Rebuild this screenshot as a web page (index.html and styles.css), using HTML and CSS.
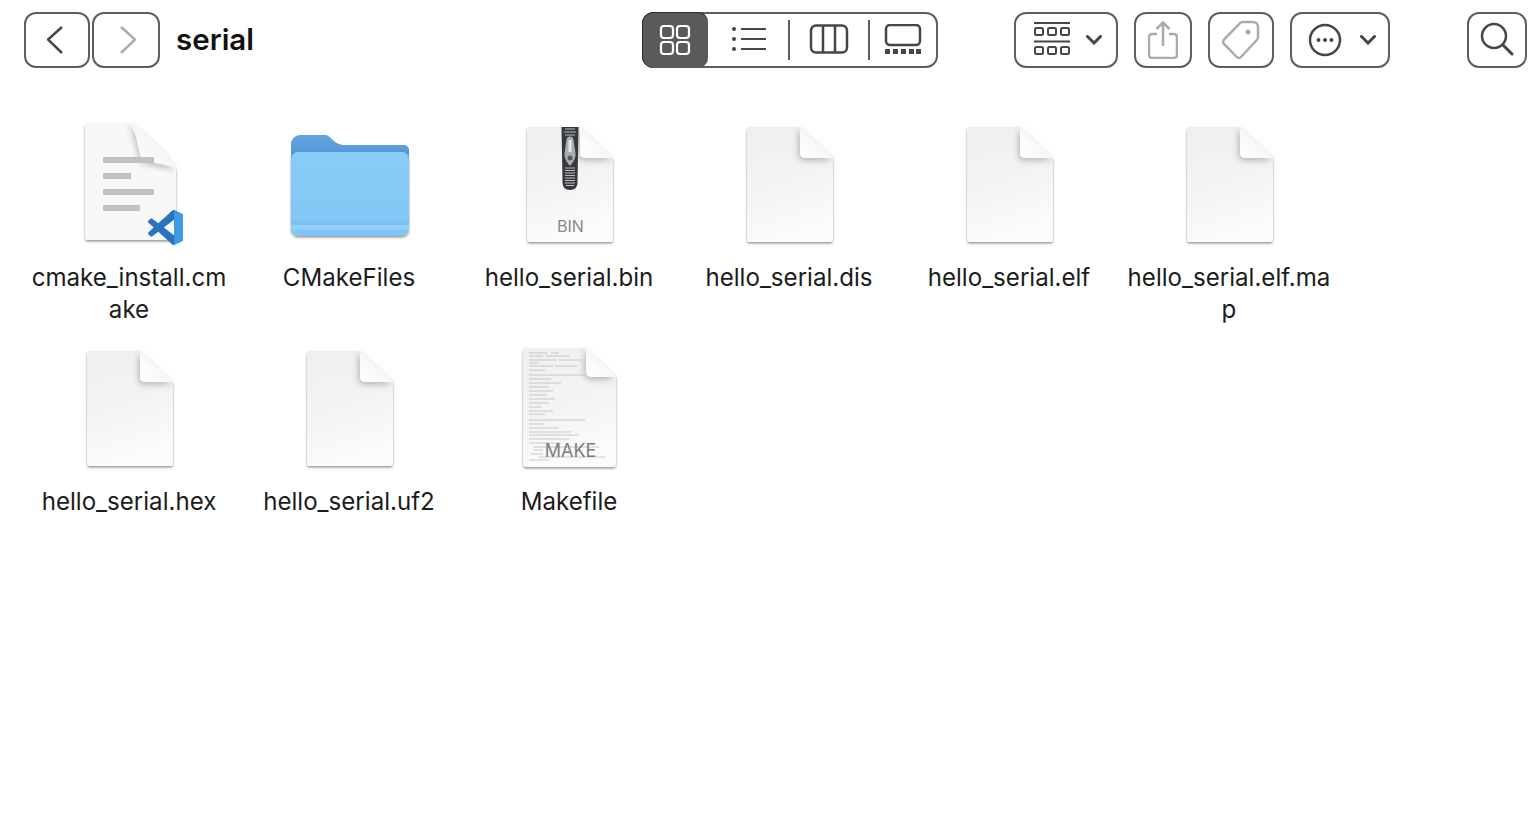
FILE: index.html
```html
<!DOCTYPE html>
<html lang="en">
<head>
  <meta charset="UTF-8" />
  <title>serial</title>
  <link rel="stylesheet" href="styles.css">
</head>
<body>

<svg class="defs" width="0" height="0">
  <defs>
    <linearGradient id="paper" x1="0" y1="0" x2="0.25" y2="1">
      <stop offset="0" stop-color="#efefef"/>
      <stop offset="0.6" stop-color="#f4f4f4"/>
      <stop offset="1" stop-color="#fbfbfb"/>
    </linearGradient>
    <linearGradient id="fold" x1="0" y1="1" x2="1" y2="0">
      <stop offset="0" stop-color="#ffffff"/>
      <stop offset="0.7" stop-color="#f4f4f4"/>
      <stop offset="1" stop-color="#e2e2e2"/>
    </linearGradient>
    <linearGradient id="folder-front" x1="0" y1="0" x2="0" y2="1">
      <stop offset="0" stop-color="#8accf8"/>
      <stop offset="1" stop-color="#80c5f5"/>
    </linearGradient>
    <linearGradient id="folder-back" x1="0" y1="0" x2="0" y2="1">
      <stop offset="0" stop-color="#62a6e0"/>
      <stop offset="1" stop-color="#4f93d3"/>
    </linearGradient>
    <filter id="edge" x="-10%" y="-10%" width="120%" height="120%">
      <feDropShadow dx="0" dy="1.5" stdDeviation="1" flood-color="#000" flood-opacity="0.42"/>
    </filter>
    <filter id="fold-shadow" x="-40%" y="-40%" width="180%" height="180%">
      <feDropShadow dx="-1.500" dy="2.500" stdDeviation="3" flood-color="#000" flood-opacity="0.25"/>
    </filter>
    <symbol id="doc" viewBox="0 0 120 128">
      <path d="M21 7H71L104 38V119a3 3 0 0 1-3 3H21a3 3 0 0 1-3-3V10a3 3 0 0 1 3-3Z" fill="url(#paper)" filter="url(#edge)"/>
      <path d="M71 7L104 38H76a5 5 0 0 1-5-5Z" fill="url(#fold)" filter="url(#fold-shadow)"/>
    </symbol>
  </defs>
</svg>

<div class="toolbar">
  <div class="nav">
    <button class="btn btn-back">
      <svg width="20" height="32" viewBox="0 0 20 32"><path class="dark" d="M15 3L1 15.500L15 29"/></svg>
    </button>
    <button class="btn btn-forward">
      <svg width="20" height="32" viewBox="0 0 20 32"><path class="faint" d="M5 3L19 15.500L5 29"/></svg>
    </button>
  </div>
  <div class="title">serial</div>

  <div class="views">
    <div class="view view-active">
      <svg width="32" height="32" viewBox="0 0 32 32">
        <g class="light">
          <rect x="2" y="2" width="12" height="12" rx="3"/>
          <rect x="18" y="2" width="12" height="12" rx="3"/>
          <rect x="2" y="18" width="12" height="12" rx="3"/>
          <rect x="18" y="18" width="12" height="12" rx="3"/>
        </g>
      </svg>
    </div>
    <div class="view view-list">
      <svg width="36" height="32" viewBox="0 0 36 32">
        <circle class="dot" cx="3" cy="5" r="2"/><circle class="dot" cx="3" cy="15" r="2"/><circle class="dot" cx="3" cy="25" r="2"/>
        <path class="dark thin" d="M10 5H35M10 15H35M10 25H35"/>
      </svg>
    </div>
    <div class="sep"></div>
    <div class="view view-columns">
      <svg width="40" height="32" viewBox="0 0 40 32">
        <rect class="dark" x="2" y="1.500" width="36" height="27" rx="5"/>
        <path class="dark" d="M14 1.500V28.500M26 1.500V28.500"/>
      </svg>
    </div>
    <div class="sep"></div>
    <div class="view view-gallery">
      <svg width="38" height="32" viewBox="0 0 38 32">
        <rect class="dark" x="2" y="1" width="34" height="20" rx="4"/>
        <path class="dot" d="M1 25h5v5H1zM9 25h5v5H9zM17 25h5v5h-5zM25 25h5v5h-5zM32 25h5v5h-5z"/>
      </svg>
    </div>
  </div>

  <button class="btn btn-group">
    <svg width="36" height="36" viewBox="0 0 36 36">
      <path class="dark thin" d="M0 1H36M0 19.500H36"/>
      <g class="dark thin">
        <rect x="1" y="6" width="8" height="7" rx="1.500"/><rect x="14" y="6" width="8" height="7" rx="1.500"/><rect x="27" y="6" width="8" height="7" rx="1.500"/>
        <rect x="1" y="25" width="8" height="7" rx="1.500"/><rect x="14" y="25" width="8" height="7" rx="1.500"/><rect x="27" y="25" width="8" height="7" rx="1.500"/>
      </g>
    </svg>
    <svg width="16" height="10" viewBox="0 0 16 10"><path class="dark bold" d="M1.500 1.500L8 8L14.500 1.500"/></svg>
  </button>
  <button class="btn btn-share">
    <svg width="30" height="38" viewBox="0 0 30 38">
      <path class="faint" d="M9 13H4a3 3 0 0 0-3 3V34a3 3 0 0 0 3 3H26a3 3 0 0 0 3-3V16a3 3 0 0 0-3-3H21"/>
      <path class="faint" d="M15 25V2M8.500 8L15 1.500L21.500 8"/>
    </svg>
  </button>
  <button class="btn btn-tag">
    <svg width="38" height="40" viewBox="0 0 38 40">
      <path class="faint" d="M21 2H31a5 5 0 0 1 5 5V17a4 4 0 0 1-1.200 3L19 37a3 3 0 0 1-4.300 0L2 24a3 3 0 0 1 0-4.300L18 3.200A4 4 0 0 1 21 2Z"/>
      <circle cx="26" cy="12" r="2.500" fill="#aaa"/>
    </svg>
  </button>
  <button class="btn btn-more">
    <svg width="34" height="34" viewBox="0 0 34 34">
      <circle class="dark" cx="17" cy="17" r="15"/>
      <circle class="dot" cx="10.500" cy="17" r="2"/><circle class="dot" cx="17" cy="17" r="2"/><circle class="dot" cx="23.500" cy="17" r="2"/>
    </svg>
    <svg width="16" height="10" viewBox="0 0 16 10"><path class="dark bold" d="M1.500 1.500L8 8L14.500 1.500"/></svg>
  </button>
  <button class="btn btn-search">
    <svg width="34" height="36" viewBox="0 0 34 36">
      <circle class="dark" cx="14" cy="14" r="12"/>
      <path class="dark bold" d="M23 23L32 32"/>
    </svg>
  </button>
</div>

<div class="files">
  <div class="file">
    <svg class="icon" viewBox="0 0 120 128">
      <path d="M19 3H60C68 3 107 42 107 50V117a3 3 0 0 1-3 3H19a3 3 0 0 1-3-3V6a3 3 0 0 1 3-3Z" fill="#f8f8f8" filter="url(#edge)"/>
      <path d="M60 3C68 3 107 42 107 50C103 44 90 45 74 40C68 32 70 12 60 3Z" fill="url(#fold)" filter="url(#fold-shadow)"/>
      <g fill="#c1c2c1">
        <rect x="34" y="37" width="51" height="6"/>
        <rect x="34" y="53" width="28" height="6"/>
        <rect x="34" y="69" width="51" height="6"/>
        <rect x="34" y="85" width="37" height="6"/>
      </g>
      <svg x="79" y="90" width="35" height="35" viewBox="0 0 100 100">
        <path fill="#2a74bf" fill-rule="evenodd" d="M70.912 99.317C72.487 99.931 74.283 99.891 75.873 99.126L96.461 89.22C98.624 88.179 100 85.989 100 83.587V16.413C100 14.011 98.624 11.822 96.461 10.781L75.873 .874C73.786 -.13 71.345 .116 69.514 1.447C69.252 1.637 69.003 1.849 68.769 2.083L29.355 38.042L12.187 25.01C10.589 23.797 8.354 23.896 6.869 25.246L1.363 30.255C-.453 31.906 -.455 34.763 1.359 36.417L16.247 50L1.359 63.583C-.455 65.237 -.453 68.094 1.363 69.745L6.869 74.754C8.354 76.104 10.589 76.204 12.187 74.991L29.355 61.959L68.769 97.917C69.393 98.541 70.125 99.01 70.912 99.317ZM75.015 27.299L45.109 50L75.015 72.701V27.299Z"/>
        <path fill="#3d9be6" d="M75.873 99.126L96.461 89.22C98.624 88.179 100 85.989 100 83.587V16.413C100 14.011 98.624 11.822 96.461 10.781L75.873 .874C73.786 -.13 71.345 .116 69.514 1.447C71.8 -.1 75 1.6 75 4.4V95.6C75 98.4 72 100 70.912 99.317C72.487 99.931 74.283 99.891 75.873 99.126Z"/>
      </svg>
    </svg>
    <div class="name">cmake_install.cmake</div>
  </div>

  <div class="file">
    <svg class="icon" viewBox="0 0 120 128">
      <path d="M11 15H36C42 15 44 25 56 25H115a5 5 0 0 1 5 5V40H2V24a9 9 0 0 1 9-9Z" fill="url(#folder-back)"/>
      <path d="M9 32H113a7 7 0 0 1 7 7V109a7 7 0 0 1-7 7H9a7 7 0 0 1-7-7V39a7 7 0 0 1 7-7Z" fill="url(#folder-front)" filter="url(#edge)"/>
      <path d="M2 100H120V105H2Z" fill="#6fb6ea" opacity="0.3"/>
      <path d="M2 105H120V110H2Z" fill="#a4d9fb" opacity="0.5"/>
    </svg>
    <div class="name">CMakeFiles</div>
  </div>

  <div class="file">
    <svg class="icon" viewBox="0 0 120 128">
      <use href="#doc"/>
      <path d="M52.500 7H69.500L68.500 62C68.500 67 66 70 61 70C56 70 53.500 67 53.500 62Z" fill="#36383b"/>
      <path d="M56 9H66M55 12H67M56 15H66M56 48H66M56 50.500H66M56 53H66M56 55.500H66M56 58H66M56 60.500H66M56 63H66M57 65.500H65" stroke="#b9bcbf" stroke-width="1.200"/>
      <path d="M57.500 20a3.500 3.500 0 0 1 7 0L66.500 33C67 39 64 42 61 46C58 42 55 39 55.500 33Z" fill="#a9adb1"/>
      <path d="M59.500 20H62.500V32H59.500Z" fill="#e4e6e8"/>
      <circle cx="61" cy="38" r="2.500" fill="#55585b"/>
      <text class="badge" x="61.500" y="112">BIN</text>
    </svg>
    <div class="name">hello_serial.bin</div>
  </div>

  <div class="file">
    <svg class="icon"><use href="#doc"/></svg>
    <div class="name">hello_serial.dis</div>
  </div>
  <div class="file">
    <svg class="icon"><use href="#doc"/></svg>
    <div class="name">hello_serial.elf</div>
  </div>
  <div class="file">
    <svg class="icon"><use href="#doc"/></svg>
    <div class="name">hello_serial.elf.map</div>
  </div>
  <div class="file">
    <svg class="icon"><use href="#doc"/></svg>
    <div class="name">hello_serial.hex</div>
  </div>
  <div class="file">
    <svg class="icon"><use href="#doc"/></svg>
    <div class="name">hello_serial.uf2</div>
  </div>

  <div class="file">
    <svg class="icon" viewBox="0 0 120 128">
      <path d="M17 4H77L107 33V120a3 3 0 0 1-3 3H17a3 3 0 0 1-3-3V7a3 3 0 0 1 3-3Z" fill="url(#paper)" filter="url(#edge)"/>
      <path d="M77 4L107 33H83a6 6 0 0 1-6-6Z" fill="url(#fold)" filter="url(#fold-shadow)"/>
      <path class="greek" d="M20 9H38M42 9H50M20 12H34M37 12H60M20 16H48M50 16H72M20 19H30M20 22H44M46 22H68M20 26H36
        M20 31H76M20 35H42M20 39H52M20 43H40M20 47H44M20 51H38M20 55H46M20 59H40M20 63H32M20 67H44M20 70H36
        M20 76H76M20 80H34M20 84H50M20 88H62M20 91H70M20 95H60M20 99H52M24 103H90M24 106H34M22 110H34M30 113H96M20 116H40"/>
      <text class="badge badge-make" x="61.500" y="113">MAKE</text>
    </svg>
    <div class="name">Makefile</div>
  </div>
</div>

</body>
</html>
```

FILE: styles.css
```css
body {
  margin: 0;
  background: #fff;
  color: #1c1c1c;
  font-family: Inter, "Noto Sans", sans-serif;
  overflow: hidden;
}

.defs {
  display: block;
}

.toolbar {
  display: flex;
  height: 56px;
  margin-top: 12px;
  padding-left: 24px;
}

.nav {
  display: flex;
  gap: 2px;
}

.btn {
  display: flex;
  align-items: center;
  justify-content: center;
  height: 56px;
  padding: 0;
  box-sizing: border-box;
  border: 2px solid #5e5e5e;
  border-radius: 12px;
  background: #fff;
}

.btn-back { width: 66px; }
.btn-forward { width: 68px; }
.btn-group { width: 104px; margin-left: 76px; gap: 16px; padding-left: 4px; }
.btn-share { width: 58px; margin-left: 16px; }
.btn-tag { width: 66px; margin-left: 16px; }
.btn-more { width: 100px; margin-left: 16px; gap: 18px; padding-left: 3px; }
.btn-search { width: 60px; margin-left: 77px; }

.title {
  width: 482px;
  padding-left: 16px;
  box-sizing: border-box;
  font-size: 29.5px;
  font-weight: 600;
  line-height: 54px;
  color: #111;
}

.views {
  display: flex;
  align-items: center;
  width: 296px;
  box-sizing: border-box;
  border: 2px solid #5e5e5e;
  border-radius: 12px;
}

.view {
  display: flex;
  align-items: center;
  justify-content: center;
  box-sizing: border-box;
}

.view-active {
  width: 66px;
  height: 56px;
  margin: -2px 0 -2px -2px;
  border-radius: 12px 10px 10px 12px;
  background: #5a5a5a;
  box-shadow: inset 1px 0 0 #2c2c2c, inset 0 1px 0 #2c2c2c;
}

.view-list { width: 81px; padding-left: 3px; }
.view-columns { width: 79px; }
.view-gallery { width: 66px; }

.sep {
  width: 2px;
  height: 40px;
  background: #5e5e5e;
}

.dark, .dark rect {
  fill: none;
  stroke: #464646;
  stroke-width: 2.5;
}

.thin, .thin rect { stroke-width: 2; }
.bold { stroke-width: 3; stroke-linecap: round; }

.dot {
  fill: #464646;
}

.faint {
  fill: none;
  stroke: #ababab;
  stroke-width: 2.5;
}

.light rect {
  fill: none;
  stroke: #fff;
  stroke-width: 2.2;
}

.files {
  display: grid;
  grid-template-columns: repeat(6, 220px);
  grid-auto-rows: 224px;
  padding: 52px 0 0 19px;
}

.file {
  display: flex;
  flex-direction: column;
  align-items: center;
}

.icon {
  display: block;
  width: 120px;
  height: 128px;
  margin-bottom: 14px;
  overflow: visible;
}

.name {
  width: 206px;
  font-size: 24.1px;
  line-height: 32px;
  text-align: center;
  overflow-wrap: anywhere;
}

.badge {
  font-family: Inter, sans-serif;
  font-size: 16px;
  fill: #8a8a8a;
  text-anchor: middle;
}

.badge-make {
  font-size: 18px;
  fill: #7d7d7d;
}

.greek {
  fill: none;
  stroke: #bdbdbd;
  stroke-width: 0.8;
}
```
